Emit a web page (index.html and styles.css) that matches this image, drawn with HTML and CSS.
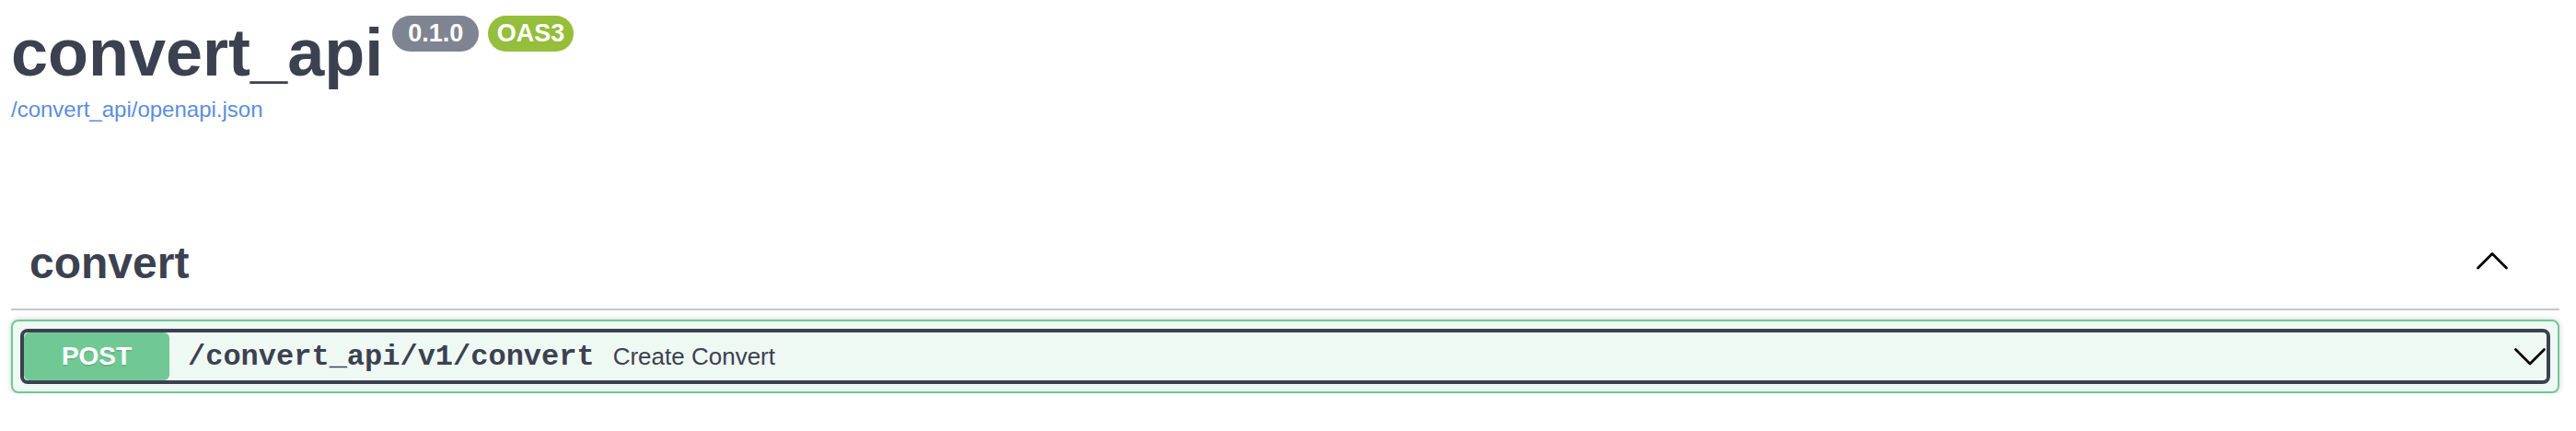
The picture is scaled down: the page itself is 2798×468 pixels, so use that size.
FILE: index.html
```html
<!DOCTYPE html>
<html lang="en">
<head>
<meta charset="utf-8">
<title>convert_api</title>
<link rel="stylesheet" href="styles.css">
</head>
<body>
<div class="page">
  <div class="info">
    <div class="title-row">
      <h2 class="title">convert_api</h2>
      <small class="badge version"><pre> 0.1.0 </pre></small>
      <small class="badge stamp"><pre>OAS3</pre></small>
    </div>
    <a class="url" href="#">/convert_api/openapi.json</a>
  </div>
  <section class="tag-section">
    <h3 class="tag">
      <span class="tag-name">convert</span>
      <span class="spacer"></span>
      <svg class="arrow" width="36" height="26" viewBox="0 0 36 26" aria-hidden="true">
        <polyline points="2.5,18 18,2.5 33.5,18" fill="none" stroke="#000" stroke-width="2.8" stroke-linecap="round" stroke-linejoin="round"/>
      </svg>
    </h3>
    <div class="opblock">
      <div class="summary">
        <span class="method">POST</span>
        <span class="path">/convert_api/v1/convert</span>
        <span class="desc">Create Convert</span>
        <svg class="arrow" width="36" height="26" viewBox="0 0 36 26" aria-hidden="true">
          <polyline points="2.5,5.5 18,21 33.5,5.5" fill="none" stroke="#000" stroke-width="2.8" stroke-linecap="round" stroke-linejoin="round"/>
        </svg>
      </div>
    </div>
  </section>
</div>
</body>
</html>
```

FILE: styles.css
```css
body {
  margin: 0;
  background: #ffffff;
  font-family: "Liberation Sans", Arial, sans-serif;
  color: #3c4150;
}

.page {
  padding: 17px 18px 0 12px;
}

.title-row {
  display: flex;
  align-items: flex-start;
}

.title {
  margin: 0;
  font-size: 72px;
  line-height: 80px;
  font-weight: 700;
  color: #3c4150;
}

.badge {
  margin-left: 10px;
  border-radius: 57px;
  padding: 4px 9.5px;
}

.badge pre {
  margin: 0;
  font-family: "Liberation Sans", Arial, sans-serif;
  font-size: 27px;
  line-height: 31px;
  font-weight: 700;
  color: #ffffff;
  white-space: pre;
}

.version {
  background: #7e8491;
}

.stamp {
  background: #94be3b;
}

.url {
  display: block;
  margin-top: 8px;
  font-size: 24px;
  line-height: 28px;
  color: #5b8edc;
  text-decoration: none;
}

.tag {
  display: flex;
  align-items: center;
  margin: 105px 0 10px;
  padding: 20px 55px 22px 20px;
  border-bottom: 2px solid #c5c6ca;
  font-size: 48px;
  line-height: 55px;
  font-weight: 700;
  color: #3c4150;
}

.spacer {
  flex: 1;
}

.arrow {
  display: block;
  flex-shrink: 0;
}

.opblock {
  border: 2px solid #70c995;
  border-radius: 8px;
  background: #eff9f4;
  box-shadow: 0 0 6px rgba(0, 0, 0, 0.19);
  padding: 8px;
}

.summary {
  display: flex;
  align-items: center;
  height: 52px;
  border: 4px solid #3c4150;
  border-radius: 8px;
}

.method {
  flex-shrink: 0;
  width: 158px;
  height: 52px;
  display: flex;
  align-items: center;
  justify-content: center;
  background: #70c995;
  color: #ffffff;
  font-size: 28px;
  font-weight: 700;
  border-radius: 6px;
  text-shadow: 0 2px 0 rgba(0, 0, 0, 0.1);
}

.path {
  padding: 0 20px;
  font-family: "Liberation Mono", "Courier New", monospace;
  font-size: 32px;
  font-weight: 700;
  color: #3c4150;
}

.desc {
  flex: 1;
  font-size: 26px;
  color: #3c4150;
}
```
